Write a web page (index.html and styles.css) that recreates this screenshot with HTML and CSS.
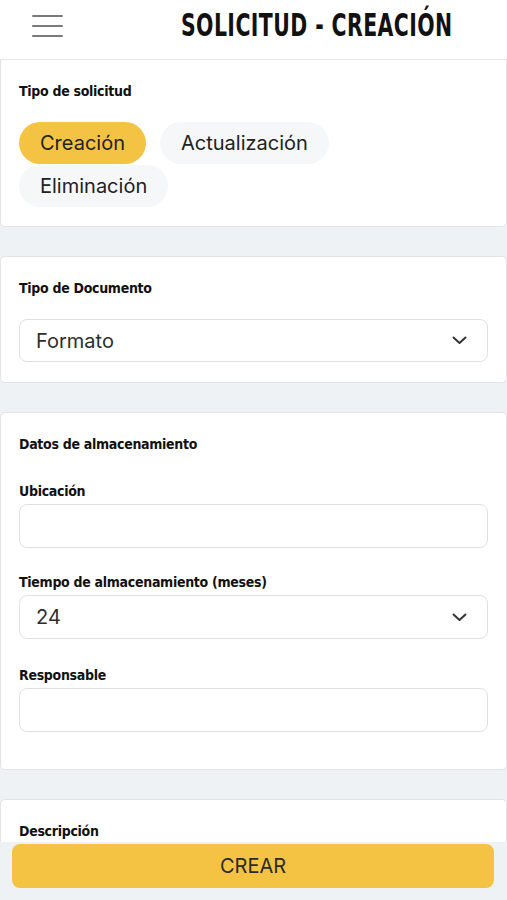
FILE: index.html
```html
<!DOCTYPE html>
<html lang="es">
<head>
<meta charset="utf-8">
<title>Solicitud - Creación</title>
<link rel="stylesheet" href="styles.css">
</head>
<body>
<header class="topbar">
  <button class="menu" aria-label="Menú"><span></span><span></span><span></span></button>
  <h1 class="title"><span>SOLICITUD - CREACIÓN</span></h1>
</header>

<main class="content">
  <section class="card card-first">
    <h2 class="label">Tipo de solicitud</h2>
    <div class="chips">
      <button class="chip chip-active">Creación</button>
      <button class="chip">Actualización</button>
      <button class="chip">Eliminación</button>
    </div>
  </section>

  <section class="card card-doc">
    <h2 class="label">Tipo de Documento</h2>
    <div class="select select-doc">
      <span>Formato</span>
      <svg class="chev" width="15" height="9" viewBox="0 0 15 9"><path d="M1.5 1.5 L7.5 7 L13.5 1.5" fill="none" stroke="#333" stroke-width="2" stroke-linecap="round" stroke-linejoin="round"/></svg>
    </div>
  </section>

  <section class="card card-store">
    <h2 class="label">Datos de almacenamiento</h2>
    <div class="field field-1">
      <label class="label">Ubicación</label>
      <div class="input"></div>
    </div>
    <div class="field field-2">
      <label class="label">Tiempo de almacenamiento (meses)</label>
      <div class="select">
        <span>24</span>
        <svg class="chev" width="15" height="9" viewBox="0 0 15 9"><path d="M1.5 1.5 L7.5 7 L13.5 1.5" fill="none" stroke="#333" stroke-width="2" stroke-linecap="round" stroke-linejoin="round"/></svg>
      </div>
    </div>
    <div class="field field-3">
      <label class="label">Responsable</label>
      <div class="input"></div>
    </div>
  </section>

  <section class="card card-desc">
    <h2 class="label">Descripción</h2>
    <div class="input input-tall"></div>
  </section>
</main>

<footer class="footer">
  <button class="create">CREAR</button>
</footer>
</body>
</html>
```
FILE: styles.css
```css
* { box-sizing: border-box; }
html, body { margin: 0; padding: 0; }
body {
  background: #eff2f5;
  font-family: "Inter", "Liberation Sans", sans-serif;
  color: #222;
  height: 900px;
  overflow: hidden;
}
.topbar {
  height: 59px;
  background: #fff;
  display: flex;
  align-items: flex-start;
  position: relative;
}
.menu {
  margin: 15px 0 0 32px;
  padding: 0;
  border: 0;
  background: none;
  display: flex;
  flex-direction: column;
  gap: 8px;
  width: 31px;
}
.menu span {
  display: block;
  height: 2px;
  width: 31px;
  background: #7a7a7a;
  border-radius: 1px;
}
.title {
  margin: 9px 54px 0 auto;
  font-family: "DejaVu Sans Condensed", "DejaVu Sans", sans-serif;
  font-weight: 700;
  font-size: 32px;
  line-height: 32px;
  color: #111;
  white-space: nowrap;
}
.title span {
  display: inline-block;
  transform: scaleX(0.71);
  transform-origin: right center;
  letter-spacing: 0.6px;
}
.content {
  display: flex;
  flex-direction: column;
  gap: 29px;
}
.card {
  background: #fff;
  border: 1px solid #e1e4e7;
  border-radius: 5px;
  padding: 22px 18px 20px 18px;
}
.card-first { border-radius: 0 0 5px 5px; padding-bottom: 19px; }
.label {
  display: block;
  margin: 0;
  font-family: "DejaVu Sans Condensed", "DejaVu Sans", sans-serif;
  font-weight: 700;
  font-size: 14px;
  line-height: 18px;
  color: #111;
  letter-spacing: -0.3px;
  white-space: nowrap;
}
.chips {
  margin-top: 22px;
  display: flex;
  flex-wrap: wrap;
  column-gap: 14px;
  row-gap: 1px;
  max-width: 400px;
}
.chip {
  height: 42px;
  padding: 0 21px;
  border: 0;
  border-radius: 21px;
  background: #f6f7f9;
  font-family: "Inter", sans-serif;
  font-size: 20px;
  color: #222;
}
.chip-active { background: #f5c344; }
.select, .input {
  height: 44px;
  border: 1.5px solid #e0e0e0;
  border-radius: 8px;
  background: #fff;
}
.select {
  display: flex;
  align-items: center;
  justify-content: space-between;
  padding: 0 20px 0 16px;
  font-size: 20px;
  color: #2e2e2e;
}
.select-doc { margin-top: 22px; height: 43px; }
.chev { display: block; }
.field .label { margin-bottom: 4px; }
.field-1 { margin-top: 29px; }
.field-2 { margin-top: 25px; }
.field-3 { margin-top: 27px; }
.card-store { padding-bottom: 37px; }
.card-desc { padding-bottom: 60px; }
.input-tall { margin-top: 6px; height: 90px; }
.footer {
  position: fixed;
  left: 0;
  right: 0;
  bottom: 0;
  height: 58px;
  background: #eff2f5;
  padding: 2px 13px 12px 12px;
}
.create {
  display: block;
  width: 100%;
  height: 44px;
  border: 0;
  border-radius: 8px;
  background: #f5c344;
  font-family: "Inter", sans-serif;
  font-size: 20px;
  color: #2a2a2a;
}
```
